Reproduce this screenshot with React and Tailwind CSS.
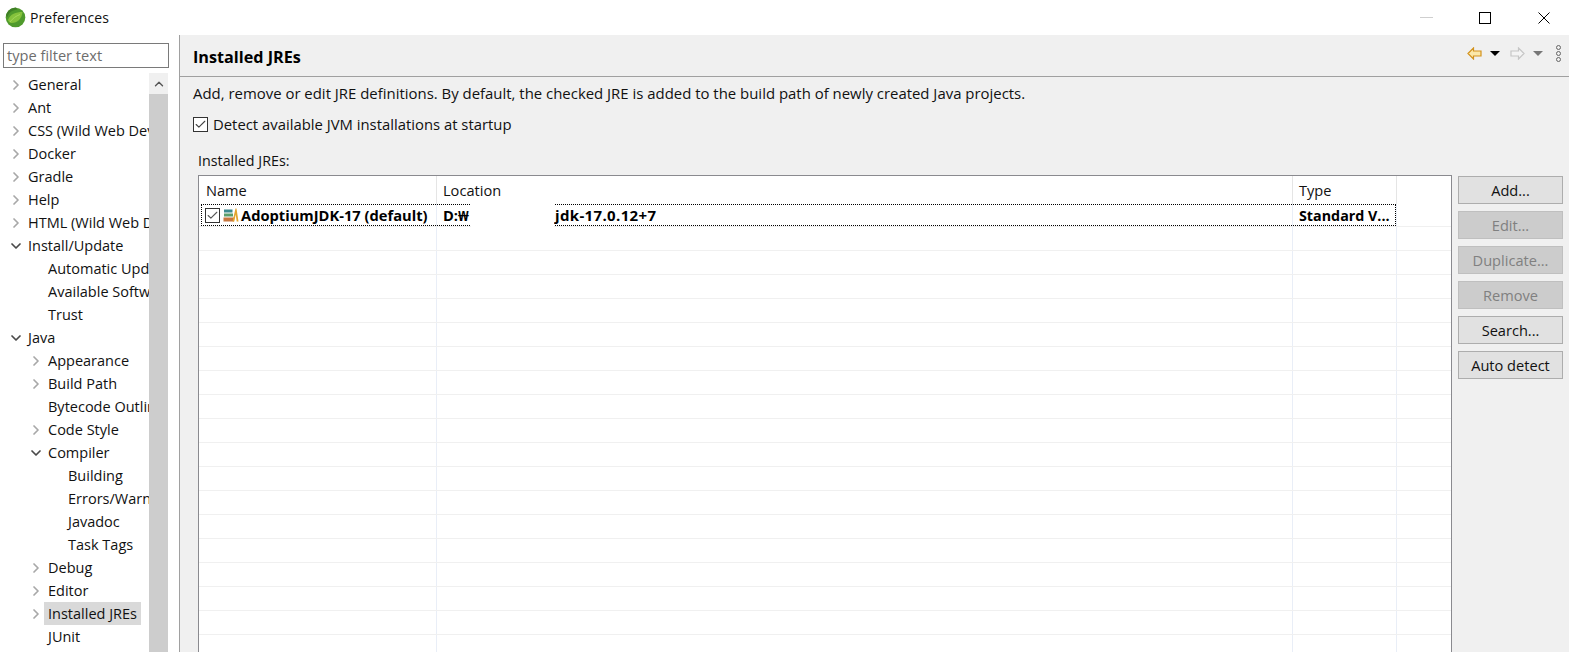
import React from 'react';
import { ChevronRight, ChevronDown, ChevronUp, Check } from 'lucide-react';

const tree = [
    { label: 'General', depth: 0, arrow: 'right' },
    { label: 'Ant', depth: 0, arrow: 'right' },
    { label: 'CSS (Wild Web Developer)', depth: 0, arrow: 'right' },
    { label: 'Docker', depth: 0, arrow: 'right' },
    { label: 'Gradle', depth: 0, arrow: 'right' },
    { label: 'Help', depth: 0, arrow: 'right' },
    { label: 'HTML (Wild Web Developer)', depth: 0, arrow: 'right' },
    { label: 'Install/Update', depth: 0, arrow: 'down' },
    { label: 'Automatic Updates', depth: 1 },
    { label: 'Available Software Sites', depth: 1 },
    { label: 'Trust', depth: 1 },
    { label: 'Java', depth: 0, arrow: 'down' },
    { label: 'Appearance', depth: 1, arrow: 'right' },
    { label: 'Build Path', depth: 1, arrow: 'right' },
    { label: 'Bytecode Outline', depth: 1 },
    { label: 'Code Style', depth: 1, arrow: 'right' },
    { label: 'Compiler', depth: 1, arrow: 'down' },
    { label: 'Building', depth: 2 },
    { label: 'Errors/Warnings', depth: 2 },
    { label: 'Javadoc', depth: 2 },
    { label: 'Task Tags', depth: 2 },
    { label: 'Debug', depth: 1, arrow: 'right' },
    { label: 'Editor', depth: 1, arrow: 'right' },
    { label: 'Installed JREs', depth: 1, arrow: 'right', selected: true },
    { label: 'JUnit', depth: 1 },
];

const depthPad = ['pl-[5px]', 'pl-[25px]', 'pl-[45px]'];

const buttons = [
    { label: 'Add...' },
    { label: 'Edit...', disabled: true },
    { label: 'Duplicate...', disabled: true },
    { label: 'Remove', disabled: true },
    { label: 'Search...' },
    { label: 'Auto detect' },
];

const TreeRow = ({ item }) => (
    <div className={`relative h-[23px] flex items-center shrink-0 whitespace-nowrap ${depthPad[item.depth]}`}>
        {item.arrow === 'right' && (
            <ChevronRight size={16} strokeWidth={2.6} className="text-[#a8a8a8] mr-[4px] shrink-0" />
        )}
        {item.arrow === 'down' && (
            <ChevronDown size={16} strokeWidth={2.6} className="text-[#4a4a4a] mr-[4px] shrink-0" />
        )}
        {!item.arrow && <span className="w-[20px] shrink-0" />}
        <span className={item.selected ? 'bg-[#d9d9d9] -ml-[4px] px-[4px] h-[23px] leading-[23px]' : ''}>{item.label}</span>
    </div>
);

const Logo = () => (
    <svg width="21" height="21" viewBox="0 0 21 21" className="shrink-0">
        <circle cx="10.5" cy="10.5" r="9.8" fill="#4f9a2c" />
        <path d="M1 9c1-5 5-8.500 10-8.500l1.500 2C8 3 4 5 2.500 10z" fill="#3f7f26" />
        <path d="M3 13c2-6 8-8 14.500-8-.5 6.500-5 11-11 11-1.500 0-3-1-3.500-3z" fill="#85c23c" />
        <path d="M5 15c3-4 6-6 10-7.500" fill="none" stroke="#a6d95c" strokeWidth="1" />
    </svg>
);

const LibIcon = () => (
    <svg width="16" height="16" viewBox="0 0 16 16" className="shrink-0">
        <rect x="1" y="2.500" width="8.500" height="3" fill="#3c8a8f" />
        <rect x="1" y="6.500" width="9" height="3" fill="#5b9e6d" />
        <rect x="0.500" y="10.500" width="10.500" height="4" fill="#c7763f" />
        <path d="M9.500 14.500l3-13h1l2 13h-1.800l-1-7-1.400 7z" fill="#e3a52e" />
    </svg>
);

const App = () => {
    return (
        <div className="w-[1569px] h-[652px] overflow-hidden bg-white flex flex-col text-[15px] text-[#111] font-['Open_Sans','Noto_Sans',sans-serif]">
            {/* title bar */}
            <div className="h-[35px] shrink-0 flex items-center pl-[5px] bg-white">
                <Logo />
                <span className="ml-[4px] text-[14px] tracking-[0.1px]">Preferences</span>
                <div className="ml-auto flex items-center pr-[19px]">
                    <span className="w-[13px] h-px bg-[#cfcfcf] mr-[46px]" />
                    <span className="w-[12px] h-[12px] border border-black mr-[47px]" />
                    <svg width="12" height="12" viewBox="0 0 12 12">
                        <path d="M0.500 0.500l11 11M11.500 0.500l-11 11" stroke="black" strokeWidth="1" fill="none" />
                    </svg>
                </div>
            </div>

            <div className="flex-1 flex min-h-0">
                {/* left side */}
                <div className="w-[179px] shrink-0 flex flex-col pl-[3px] pr-[11px]">
                    <div className="mt-[8px] h-[25px] w-[166px] shrink-0 border border-[#7a7a7a] px-[3px] flex items-center text-[14.600px] text-[#6d6d6d] whitespace-nowrap">
                        type filter text
                    </div>
                    <div className="mt-[5px] flex-1 flex min-h-0 w-[165px]">
                        <div className="w-[146px] shrink-0 overflow-hidden flex flex-col text-[14.500px]">
                            {tree.map(item => <TreeRow key={item.label} item={item} />)}
                        </div>
                        <div className="w-[19px] shrink-0 bg-[#cdcdcd] flex flex-col">
                            <div className="h-[21px] bg-[#f0f0f0] flex items-center justify-center">
                                <ChevronUp size={14} strokeWidth={2.4} className="text-[#555]" />
                            </div>
                        </div>
                    </div>
                </div>

                {/* right side */}
                <div className="flex-1 bg-[#f0f0f0] border-l border-l-[#a0a0a0] pl-[13px] flex flex-col min-w-0">
                    <div className="h-[42px] shrink-0 flex items-center border-b border-b-[#a0a0a0] -ml-[13px] pl-[13px] pr-[8px]">
                        <span className="mt-[3px] font-bold text-[16.200px] text-black">Installed JREs</span>
                        <div className="ml-auto mb-[5px] flex items-center">
                            <svg width="15" height="13" viewBox="0 0 15 13" className="mr-[8px]">
                                <path d="M1 6.500L6.500 1v3h7.500v5H6.500v3z" fill="#fbe7a8" stroke="#d3921c" strokeWidth="1.200" />
                            </svg>
                            <span className="w-0 h-0 border-x-[5px] border-x-transparent border-t-[5px] border-t-black mr-[10px]" />
                            <svg width="15" height="13" viewBox="0 0 15 13" className="mr-[8px]">
                                <path d="M14 6.500L8.500 1v3H1v5h7.500v3z" fill="#f4f4f4" stroke="#c6c6c6" strokeWidth="1.200" />
                            </svg>
                            <span className="w-0 h-0 border-x-[5px] border-x-transparent border-t-[5px] border-t-[#777] mr-[13px]" />
                            <div className="flex flex-col gap-px">
                                <span className="w-[5px] h-[5px] rounded-full border border-[#666]" />
                                <span className="w-[5px] h-[5px] rounded-full border border-[#666]" />
                                <span className="w-[5px] h-[5px] rounded-full border border-[#666]" />
                            </div>
                        </div>
                    </div>

                    <div className="mt-[5px] h-[23px] flex items-center text-[14.930px] whitespace-nowrap">
                        Add, remove or edit JRE definitions. By default, the checked JRE is added to the build path of newly created Java projects.
                    </div>
                    <div className="mt-[8px] h-[23px] flex items-center text-[14.850px]">
                        <span className="w-[15px] h-[15px] border border-[#333] bg-white flex items-center justify-center mr-[5px]">
                            <Check size={13} strokeWidth={2} className="text-[#444]" />
                        </span>
                        Detect available JVM installations at startup
                    </div>
                    <div className="mt-[15px] ml-[5px] h-[20px] flex items-center text-[14.300px]">Installed JREs:</div>

                    <div className="mt-[4px] flex-1 flex min-h-0 pl-[5px]">
                        <div className="w-[1254px] shrink-0 bg-white border border-[#8a8a8f] border-b-0 relative overflow-hidden">
                            <div className="h-[28px] flex items-center text-[14.600px]">
                                <div className="w-[238px] h-full pl-[7px] pt-px flex items-center border-r border-r-[#e5e5e5]">Name</div>
                                <div className="w-[856px] h-full pl-[6px] pt-px flex items-center border-r border-r-[#e5e5e5]">Location</div>
                                <div className="w-[104px] h-full pl-[6px] pt-px flex items-center border-r border-r-[#e5e5e5]">Type</div>
                            </div>
                            <div className="h-[23px] flex items-center font-bold text-[14.700px] text-black border-b border-b-[#f0f0f0] relative">
                                <div className="w-[238px] h-full pl-[6px] flex items-center border-r border-r-[#e9eef7]">
                                    <span className="w-[15px] h-[15px] border border-[#333] flex items-center justify-center mr-[3px] shrink-0">
                                        <Check size={13} strokeWidth={2} className="text-[#555]" />
                                    </span>
                                    <LibIcon />
                                    <span className="ml-[2px] whitespace-nowrap">AdoptiumJDK-17 (default)</span>
                                </div>
                                <div className="w-[856px] h-full pl-[6px] flex items-center border-r border-r-[#e9eef7] whitespace-nowrap">
                                    <span className="w-[112px] shrink-0">D:₩</span>
                                    <span className="text-[15px] tracking-[0.35px]">jdk-17.0.12+7</span>
                                </div>
                                <div className="w-[104px] h-full pl-[6px] pt-px flex items-center border-r border-r-[#e9eef7] whitespace-nowrap overflow-hidden text-[14.300px]">Standard V...</div>
                                {/* focus rectangle of the selected row */}
                                <div className="absolute left-[2px] top-0 w-[1195px] h-[22px] border border-dotted border-black" />
                                {/* blanked out part of the path */}
                                <div className="absolute left-[272px] top-0 w-[83px] h-[23px] bg-white" />
                            </div>
                            {Array.from({ length: 18 }).map((_, i) => (
                                <div key={i} className="h-[24px] flex border-b border-b-[#f0f0f0]">
                                    <div className="w-[238px] border-r border-r-[#e9eef7]" />
                                    <div className="w-[856px] border-r border-r-[#e9eef7]" />
                                    <div className="w-[104px] border-r border-r-[#e9eef7]" />
                                </div>
                            ))}
                        </div>

                        <div className="ml-[6px] w-[105px] shrink-0 flex flex-col gap-[7px] pt-px">
                            {buttons.map(b => (
                                <div
                                    key={b.label}
                                    className={`h-[28px] pt-px flex items-center justify-center border border-[#adadad] text-[14.600px] ${b.disabled ? 'bg-[#cccccc] text-[#808080] border-[#bfbfbf]' : 'bg-[#e1e1e1] text-[#111]'}`}
                                >
                                    {b.label}
                                </div>
                            ))}
                        </div>
                    </div>
                </div>
            </div>
        </div>
    );
};

export default App;
